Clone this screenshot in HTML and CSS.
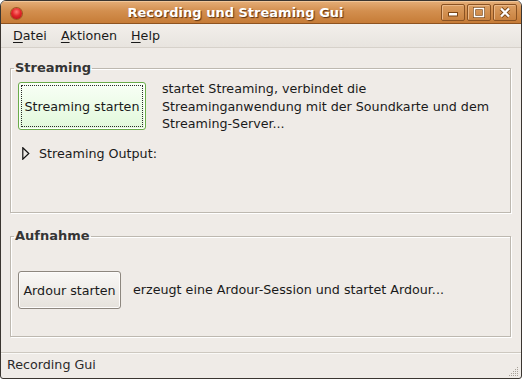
FILE: index.html
```html
<!DOCTYPE html>
<html lang="de">
<head>
  <meta charset="UTF-8" />
  <title>Recording und Streaming Gui</title>
  <link rel="stylesheet" href="styles.css">
</head>
<body>
  <div class="window">
    <div class="titlebar">
      <div class="title-left">
        <span class="close-dot"></span>
      </div>
      <div class="title">Recording und Streaming Gui</div>
      <div class="wm-buttons">
        <span class="wm-btn">
          <svg width="12" height="10" viewBox="0 0 12 10"><rect x="1.5" y="5.5" width="9" height="3.5" fill="#fff" stroke="#7a4514" stroke-width="1"/></svg>
        </span>
        <span class="wm-btn">
          <svg width="12" height="11" viewBox="0 0 12 11"><rect x="1.5" y="1.5" width="9" height="8" fill="none" stroke="#7a4514" stroke-width="3"/><rect x="1.5" y="1.5" width="9" height="8" fill="none" stroke="#fff" stroke-width="1.6"/></svg>
        </span>
        <span class="wm-btn">
          <svg width="12" height="11" viewBox="0 0 12 11"><path d="M2 1.5 L10 9.5 M10 1.5 L2 9.5" stroke="#7a4514" stroke-width="4"/><path d="M2 1.5 L10 9.5 M10 1.5 L2 9.5" stroke="#fff" stroke-width="2.4"/></svg>
        </span>
      </div>
    </div>

    <div class="menubar">
      <span class="menu-item"><u>D</u>atei</span>
      <span class="menu-item"><u>A</u>ktionen</span>
      <span class="menu-item"><u>H</u>elp</span>
    </div>

    <div class="content">
      <fieldset class="frame frame-streaming">
        <legend>Streaming</legend>
        <div class="row">
          <button class="btn btn-green">Streaming starten</button>
          <div class="desc">startet Streaming, verbindet die<br>Streaminganwendung mit der Soundkarte und dem<br>Streaming-Server...</div>
        </div>
        <div class="expander">
          <svg width="8" height="13" viewBox="0 0 8 13"><path d="M0.8 0.8 L6.8 6.5 L0.8 12.2 Z" fill="none" stroke="#111" stroke-width="1.2" stroke-linejoin="miter"/></svg>
          <span>Streaming Output:</span>
        </div>
      </fieldset>

      <fieldset class="frame frame-aufnahme">
        <legend>Aufnahme</legend>
        <div class="row row-ardour">
          <button class="btn btn-plain">Ardour starten</button>
          <div class="desc">erzeugt eine Ardour-Session und startet Ardour...</div>
        </div>
      </fieldset>
    </div>

    <div class="statusbar">
      <span>Recording Gui</span>
      <svg class="grip" width="11" height="11" viewBox="0 0 11 11">
        <g fill="#a8a299">
          <rect x="9" y="1" width="1" height="1"/>
          <rect x="7" y="3" width="1" height="1"/><rect x="9" y="3" width="1" height="1"/>
          <rect x="5" y="5" width="1" height="1"/><rect x="7" y="5" width="1" height="1"/><rect x="9" y="5" width="1" height="1"/>
          <rect x="3" y="7" width="1" height="1"/><rect x="5" y="7" width="1" height="1"/><rect x="7" y="7" width="1" height="1"/><rect x="9" y="7" width="1" height="1"/>
          <rect x="1" y="9" width="1" height="1"/><rect x="3" y="9" width="1" height="1"/><rect x="5" y="9" width="1" height="1"/><rect x="7" y="9" width="1" height="1"/><rect x="9" y="9" width="1" height="1"/>
        </g>
      </svg>
    </div>
  </div>
</body>
</html>
```

FILE: styles.css
```css
body {
  margin: 0;
  background: #fff;
  font-family: 'DejaVu Sans', 'Noto Sans', sans-serif;
  font-size: 12.7px;
  color: #1a1a1a;
}
.window {
  width: 522px;
  height: 379px;
  box-sizing: border-box;
  border: 1px solid #3a3530;
  border-radius: 6px 6px 3px 3px;
  background: #efebe7;
  display: flex;
  flex-direction: column;
  overflow: hidden;
}
.titlebar {
  height: 23px;
  flex: none;
  display: flex;
  align-items: center;
  background: linear-gradient(#e5ae78, #d38f4f 45%, #c67c37);
  border-bottom: 1px solid #8e5320;
  box-sizing: border-box;
  box-shadow: inset 0 1px 0 #f1c699;
}
.title-left {
  width: 27px;
  display: flex;
  justify-content: center;
  align-items: center;
}
.close-dot {
  width: 11px;
  height: 11px;
  margin-left: 4px;
  margin-top: 2px;
  border-radius: 50%;
  background: radial-gradient(circle at 50% 35%, #ff7a75 0, #e3262a 45%, #a80f13 100%);
  box-shadow: 0 0 0 1px #9c5a22;
}
.title {
  flex: 1;
  text-align: center;
  font-size: 13px;
  font-weight: bold;
  color: #fff;
  text-shadow: 1px 1px 1px #5c3210;
  padding-left: 2px;
}
.wm-buttons {
  display: flex;
  gap: 2px;
  margin-right: 4px;
}
.wm-btn {
  width: 24px;
  height: 17px;
  box-sizing: border-box;
  border: 1px solid #8a5222;
  border-radius: 2px;
  box-shadow: inset 1px 1px 0 #eab888;
  background: linear-gradient(#dc9f63, #c98240);
  display: flex;
  align-items: center;
  justify-content: center;
}
.menubar {
  height: 24px;
  flex: none;
  box-sizing: border-box;
  display: flex;
  align-items: center;
  padding-left: 5px;
  background: linear-gradient(#f2efeb, #e8e4df);
  border-bottom: 1px solid #d6d1ca;
}
.menu-item {
  padding: 0 7px;
  line-height: 17px;
}
.menu-item u {
  text-decoration-thickness: 1px;
  text-underline-offset: 2px;
}
.content {
  flex: 1;
  padding: 12px 10px 0 9px;
}
.frame {
  margin: 0;
  box-sizing: border-box;
  border: 1px solid #bdb8b0;
  box-shadow: 1px 1px 0 #fff, inset 1px 1px 0 #fff;
  padding: 4px 7px 7px 7px;
  min-width: 0;
}
.frame legend {
  font-size: 13px;
  font-weight: bold;
  color: #353535;
  line-height: 16px;
  padding: 0 1px;
  margin-left: -4px;
}
.frame-streaming {
  height: 153px;
}
.frame-aufnahme {
  height: 109px;
  margin-top: 15px;
  padding-top: 27px;
}
.row {
  display: flex;
  align-items: center;
  gap: 16px;
}
.row-ardour {
  gap: 12px;
}
.desc {
  line-height: 17.5px;
}
.btn {
  font-family: inherit;
  font-size: 12.7px;
  color: #1a1a1a;
  border-radius: 3px;
  padding: 0;
  flex: none;
}
.btn-green {
  width: 128px;
  height: 48px;
  border: 1px solid #6aac4a;
  background: linear-gradient(#f8fff6, #e2f9db);
  box-shadow: inset 0 0 0 1px #fbfffa;
  outline: 1px dotted #2a2a2a;
  outline-offset: -4px;
}
.btn-plain {
  width: 103px;
  height: 38px;
  border: 1px solid #8d877f;
  background: linear-gradient(#f9f8f6, #e6e2dc);
  box-shadow: inset 0 0 0 1px #fdfcfb;
}
.expander {
  display: flex;
  align-items: center;
  gap: 9px;
  margin-top: 12px;
  margin-left: 4px;
  line-height: 17px;
}
.statusbar {
  height: 26px;
  flex: none;
  box-sizing: border-box;
  border-top: 1px solid #cdc8c0;
  box-shadow: inset 0 1px 0 #faf9f7;
  display: flex;
  align-items: center;
  justify-content: space-between;
  padding: 0 2px 3px 6px;
  color: #2a2a2a;
}
.grip {
  align-self: flex-end;
  margin-bottom: -2px;
}
```
